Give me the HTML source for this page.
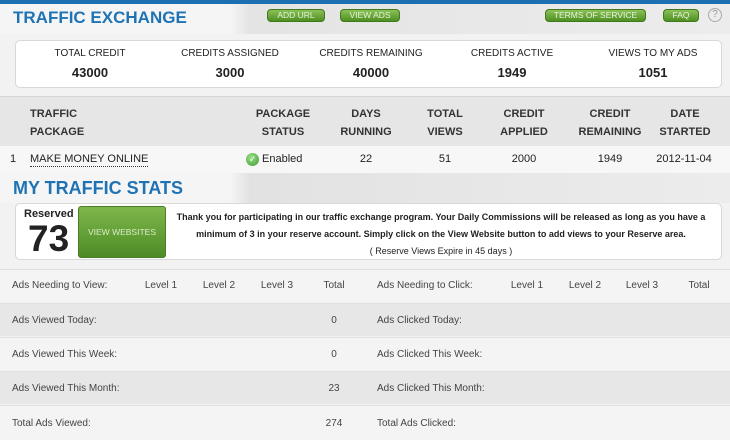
<!DOCTYPE html>
<html><head><meta charset="utf-8"><style>
*{margin:0;padding:0;box-sizing:border-box}
body{width:730px;height:440px;overflow:hidden;background:#f2f2f2;font-family:"Liberation Sans",Arial,sans-serif;position:relative;color:#222}
.a{position:absolute;white-space:nowrap}
.btn{position:absolute;height:13px;border-radius:4px;background:linear-gradient(#8cc15a,#4e8f22);border:1px solid #3f7a1a;color:#e8f5dc;font-size:8.5px;text-align:center;line-height:11px}
.box{position:absolute;background:#fff;border:1px solid #d8d8d8;border-radius:5px}
.c{text-align:center;transform:translateX(-50%)}
.h{font-size:11px;font-weight:bold;color:#333}
.row{position:absolute;left:0;width:730px;height:33px;border-top:1px solid #e0e0e0}
.s{font-size:10px;color:#444}
.d{font-size:11px}
</style></head><body>
<div class="a" style="left:0;top:0;width:730px;height:4px;background:#1b6fb3"></div>
<div class="a" style="left:0;top:4px;width:730px;height:30px;background:linear-gradient(90deg,#f5f5f5 0,#f5f5f5 230px,#e4e4e4 250px,#ececec 100%)"></div>
<div class="a" style="left:13px;top:8px;font-size:17px;font-weight:bold;color:#1e73b4">TRAFFIC EXCHANGE</div>
<div class="btn" style="left:267px;top:9px;width:58px">ADD URL</div>
<div class="btn" style="left:340px;top:9px;width:60px">VIEW ADS</div>
<div class="btn" style="left:545px;top:9px;width:101px">TERMS OF SERVICE</div>
<div class="btn" style="left:663px;top:9px;width:36px">FAQ</div>
<div class="a" style="left:708px;top:8px;width:14px;height:14px;border:1px solid #aaa;border-radius:50%;font-size:10px;color:#999;text-align:center;line-height:12px">?</div>
<div class="box" style="left:15px;top:40px;width:707px;height:48px"></div>
<div class="a c" style="left:90px;top:48px;font-size:10px;color:#222">TOTAL CREDIT</div>
<div class="a c" style="left:90px;top:65px;font-size:13px;font-weight:bold">43000</div>
<div class="a c" style="left:230px;top:48px;font-size:10px">CREDITS ASSIGNED</div>
<div class="a c" style="left:230px;top:65px;font-size:13px;font-weight:bold">3000</div>
<div class="a c" style="left:371px;top:48px;font-size:10px">CREDITS REMAINING</div>
<div class="a c" style="left:371px;top:65px;font-size:13px;font-weight:bold">40000</div>
<div class="a c" style="left:512px;top:48px;font-size:10px">CREDITS ACTIVE</div>
<div class="a c" style="left:512px;top:65px;font-size:13px;font-weight:bold">1949</div>
<div class="a c" style="left:653px;top:48px;font-size:10px">VIEWS TO MY ADS</div>
<div class="a c" style="left:653px;top:65px;font-size:13px;font-weight:bold">1051</div>
<div class="a" style="left:0;top:96px;width:730px;height:50px;background:#e6e6e6;border-top:1px solid #d6d6d6"></div>
<div class="a h" style="left:30px;top:105px;line-height:18px">TRAFFIC<br>PACKAGE</div>
<div class="a h c" style="left:283px;top:105px;line-height:18px">PACKAGE<br>STATUS</div>
<div class="a h c" style="left:366px;top:105px;line-height:18px">DAYS<br>RUNNING</div>
<div class="a h c" style="left:445px;top:105px;line-height:18px">TOTAL<br>VIEWS</div>
<div class="a h c" style="left:524px;top:105px;line-height:18px">CREDIT<br>APPLIED</div>
<div class="a h c" style="left:610px;top:105px;line-height:18px">CREDIT<br>REMAINING</div>
<div class="a h c" style="left:685px;top:105px;line-height:18px">DATE<br>STARTED</div>
<div class="a" style="left:0;top:146px;width:730px;height:27px;background:#f7f7f7"></div>
<div class="a d" style="left:10px;top:153px">1</div>
<div class="a d" style="left:30px;top:153px;border-bottom:1px dotted #333;line-height:13px">MAKE MONEY ONLINE</div>
<div class="a" style="left:246px;top:153px;width:13px;height:13px;border-radius:50%;background:radial-gradient(circle at 40% 35%,#9be08a,#3c9a2c);color:#fff;font-size:9px;text-align:center;line-height:13px">✓</div>
<div class="a d" style="left:262px;top:153px">Enabled</div>
<div class="a d c" style="left:366px;top:153px">22</div>
<div class="a d c" style="left:445px;top:153px">51</div>
<div class="a d c" style="left:524px;top:153px">2000</div>
<div class="a d c" style="left:610px;top:153px">1949</div>
<div class="a d c" style="left:684px;top:153px">2012-11-04</div>
<div class="a" style="left:0;top:173px;width:730px;height:30px;background:linear-gradient(90deg,#f5f5f5 0,#f5f5f5 230px,#e2e2e2 250px,#ececec 100%)"></div>
<div class="a" style="left:13px;top:178px;font-size:18px;font-weight:bold;color:#1e73b4">MY TRAFFIC STATS</div>
<div class="box" style="left:15px;top:203px;width:707px;height:57px"></div>
<div class="a" style="left:24px;top:208px;font-size:11px;font-weight:bold">Reserved</div>
<div class="a" style="left:28px;top:219px;font-size:37px;font-weight:bold;line-height:40px">73</div>
<div class="a" style="left:78px;top:206px;width:88px;height:52px;border-radius:3px;background:linear-gradient(#7fb64c,#4d8c25);border:1px solid #4a7e2a;color:#d9ecc8;font-size:8.5px;text-align:center;line-height:50px">VIEW WEBSITES</div>
<div class="a" style="left:441px;top:209px;transform:translateX(-50%);text-align:center;font-size:9px;font-weight:bold;line-height:17px;color:#222">Thank you for participating in our traffic exchange program. Your Daily Commissions will be released as long as you have a<br>minimum of 3 in your reserve account. Simply click on the View Website button to add views to your Reserve area.<br><span style="font-weight:normal">( Reserve Views Expire in 45 days )</span></div>
<div class="row" style="top:269px;background:#f4f4f4"></div>
<div class="row" style="top:303px;background:#e7e7e7"></div>
<div class="row" style="top:337px;background:#f4f4f4"></div>
<div class="row" style="top:371px;background:#e7e7e7"></div>
<div class="row" style="top:405px;height:35px;background:#f4f4f4"></div>
<div class="a s" style="left:12px;top:280px">Ads Needing to View:</div>
<div class="a s c" style="left:161px;top:280px">Level 1</div>
<div class="a s c" style="left:219px;top:280px">Level 2</div>
<div class="a s c" style="left:277px;top:280px">Level 3</div>
<div class="a s c" style="left:334px;top:280px">Total</div>
<div class="a s" style="left:377px;top:280px">Ads Needing to Click:</div>
<div class="a s c" style="left:527px;top:280px">Level 1</div>
<div class="a s c" style="left:585px;top:280px">Level 2</div>
<div class="a s c" style="left:642px;top:280px">Level 3</div>
<div class="a s c" style="left:699px;top:280px">Total</div>
<div class="a s" style="left:12px;top:315px">Ads Viewed Today:</div><div class="a s c" style="left:334px;top:315px">0</div>
<div class="a s" style="left:377px;top:315px">Ads Clicked Today:</div>
<div class="a s" style="left:12px;top:349px">Ads Viewed This Week:</div><div class="a s c" style="left:334px;top:349px">0</div>
<div class="a s" style="left:377px;top:349px">Ads Clicked This Week:</div>
<div class="a s" style="left:12px;top:383px">Ads Viewed This Month:</div><div class="a s c" style="left:334px;top:383px">23</div>
<div class="a s" style="left:377px;top:383px">Ads Clicked This Month:</div>
<div class="a s" style="left:12px;top:418px">Total Ads Viewed:</div><div class="a s c" style="left:334px;top:418px">274</div>
<div class="a s" style="left:377px;top:418px">Total Ads Clicked:</div>
</body></html>
